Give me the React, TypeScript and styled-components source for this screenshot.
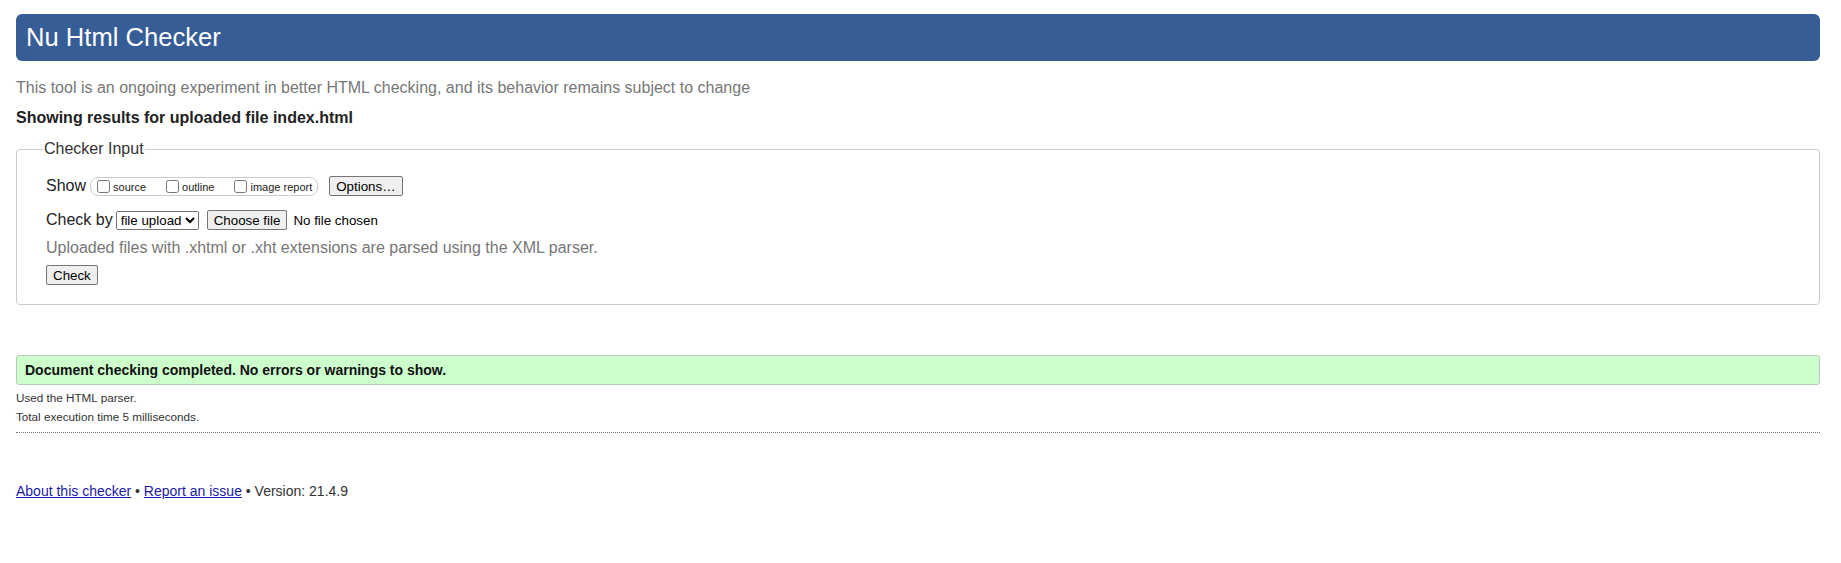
import React from "react";
import styled, { createGlobalStyle } from "styled-components";

const colors = {
  header: "#365d95",
  text: "#222",
  muted: "#777",
  rule: "#ccc",
  success: "#ccffcc",
  successBorder: "#b7cdb7",
  link: "#1a1aa6",
  buttonBg: "#efefef",
  buttonBorder: "#767676",
};

const fonts = {
  regular: `"Liberation Sans", Arial, Helvetica, sans-serif`,
};

const GlobalStyle = createGlobalStyle`
  html, body {
    margin: 0;
    background: #fff;
  }
  body {
    padding: 14px 21px 0 16px;
    font-family: ${fonts.regular};
    color: ${colors.text};
  }
`;

const Title = styled.h1`
  margin: 0;
  height: 47px;
  padding: 0 10px;
  background-color: ${colors.header};
  color: #fff;
  border-radius: 6px;
  font-size: 25.6px;
  font-weight: normal;
  line-height: 47px;
`;

const Intro = styled.p`
  margin: 18px 0 0;
  font-size: 16px;
  line-height: 18px;
  color: ${colors.muted};
`;

const ResultFor = styled.p`
  margin: 12px 0 0;
  font-size: 16px;
  font-weight: bold;
  line-height: 18px;
  color: ${colors.text};
`;

const InputBox = styled.fieldset`
  margin: 13px 0 0;
  padding: 18px 29px 18px 29px;
  border: 1px solid ${colors.rule};
  border-radius: 4px;
  min-width: 0;
`;

const Legend = styled.legend`
  margin-left: -3px;
  padding: 0 1px;
  font-size: 16px;
  line-height: 18px;
  color: #333;
`;

const Row = styled.div<{ $gap?: number }>`
  display: flex;
  align-items: center;
  height: 20px;
  margin-top: ${(p) => p.$gap ?? 0}px;
`;

const RowLabel = styled.span`
  font-size: 16px;
  margin-right: 4px;
  color: ${colors.text};
`;

const OptionGroup = styled.span`
  display: inline-flex;
  align-items: center;
  height: 17px;
  padding: 0 5px 0 2px;
  border: 1px solid ${colors.rule};
  border-radius: 8px;
`;

const Option = styled.label<{ $first?: boolean }>`
  display: inline-flex;
  align-items: center;
  margin-left: ${(p) => (p.$first ? 0 : 16)}px;
  font-size: 11px;
  color: ${colors.text};

  span {
    padding-top: 2px;
  }
`;

const Box = styled.input`
  width: 13px;
  height: 13px;
  margin: 0 3px 0 4px;
`;

const Button = styled.button<{ $space?: number }>`
  height: 20px;
  margin-left: ${(p) => p.$space ?? 0}px;
  padding: 0 6px;
  font-family: ${fonts.regular};
  font-size: 13.33px;
  color: #000;
  background-color: ${colors.buttonBg};
  border: 1px solid ${colors.buttonBorder};
  border-radius: 2px;
`;

const Select = styled.select`
  height: 19px;
  margin-left: -1px;
  font-family: ${fonts.regular};
  font-size: 13.33px;
  color: #000;
`;

const FileName = styled.span`
  margin-left: 6px;
  font-size: 13.33px;
  color: #000;
`;

const Note = styled.p`
  margin: 9px 0 0;
  font-size: 16px;
  line-height: 18px;
  color: ${colors.muted};
`;

const CheckRow = styled.div`
  margin-top: 8px;
  height: 21px;
`;

const Success = styled.div`
  margin-top: 50px;
  height: 28px;
  padding: 0 8px;
  background-color: ${colors.success};
  border: 1px solid ${colors.successBorder};
  border-radius: 3px;
  font-size: 14px;
  font-weight: bold;
  line-height: 28px;
  color: #111;
`;

const Stat = styled.p<{ $gap: number }>`
  margin: ${(p) => p.$gap}px 0 0;
  font-size: 11.7px;
  line-height: 14px;
  color: #333;
`;

const Divider = styled.hr`
  margin: 8px 0 0;
  border: 0;
  border-top: 1px dotted #777;
`;

const Footer = styled.p`
  margin: 50px 0 0;
  font-size: 14px;
  line-height: 16px;
  color: #333;

  a {
    color: ${colors.link};
    text-decoration: underline;
  }
`;

const showOptions = ["source", "outline", "image report"];

export default function App() {
  return (
    <>
      <GlobalStyle />
      <Title>Nu Html Checker</Title>
      <Intro>
        This tool is an ongoing experiment in better HTML checking, and its behavior remains subject to change
      </Intro>
      <ResultFor>Showing results for uploaded file index.html</ResultFor>

      <InputBox>
        <Legend>Checker Input</Legend>
        <Row>
          <RowLabel>Show</RowLabel>
          <OptionGroup>
            {showOptions.map((name, i) => (
              <Option key={name} $first={i === 0}>
                <Box type="checkbox" />
                <span>{name}</span>
              </Option>
            ))}
          </OptionGroup>
          <Button $space={11}>Options…</Button>
        </Row>
        <Row $gap={14}>
          <RowLabel>Check by</RowLabel>
          <Select defaultValue="file">
            <option value="address">address</option>
            <option value="file">file upload</option>
            <option value="text">text input</option>
          </Select>
          <Button $space={8}>Choose file</Button>
          <FileName>No file chosen</FileName>
        </Row>
        <Note>Uploaded files with .xhtml or .xht extensions are parsed using the XML parser.</Note>
        <CheckRow>
          <Button>Check</Button>
        </CheckRow>
      </InputBox>

      <Success>Document checking completed. No errors or warnings to show.</Success>
      <Stat $gap={6}>Used the HTML parser.</Stat>
      <Stat $gap={5}>Total execution time 5 milliseconds.</Stat>
      <Divider />

      <Footer>
        <a href="#about">About this checker</a> • <a href="#issue">Report an issue</a> • Version: 21.4.9
      </Footer>
    </>
  );
}
